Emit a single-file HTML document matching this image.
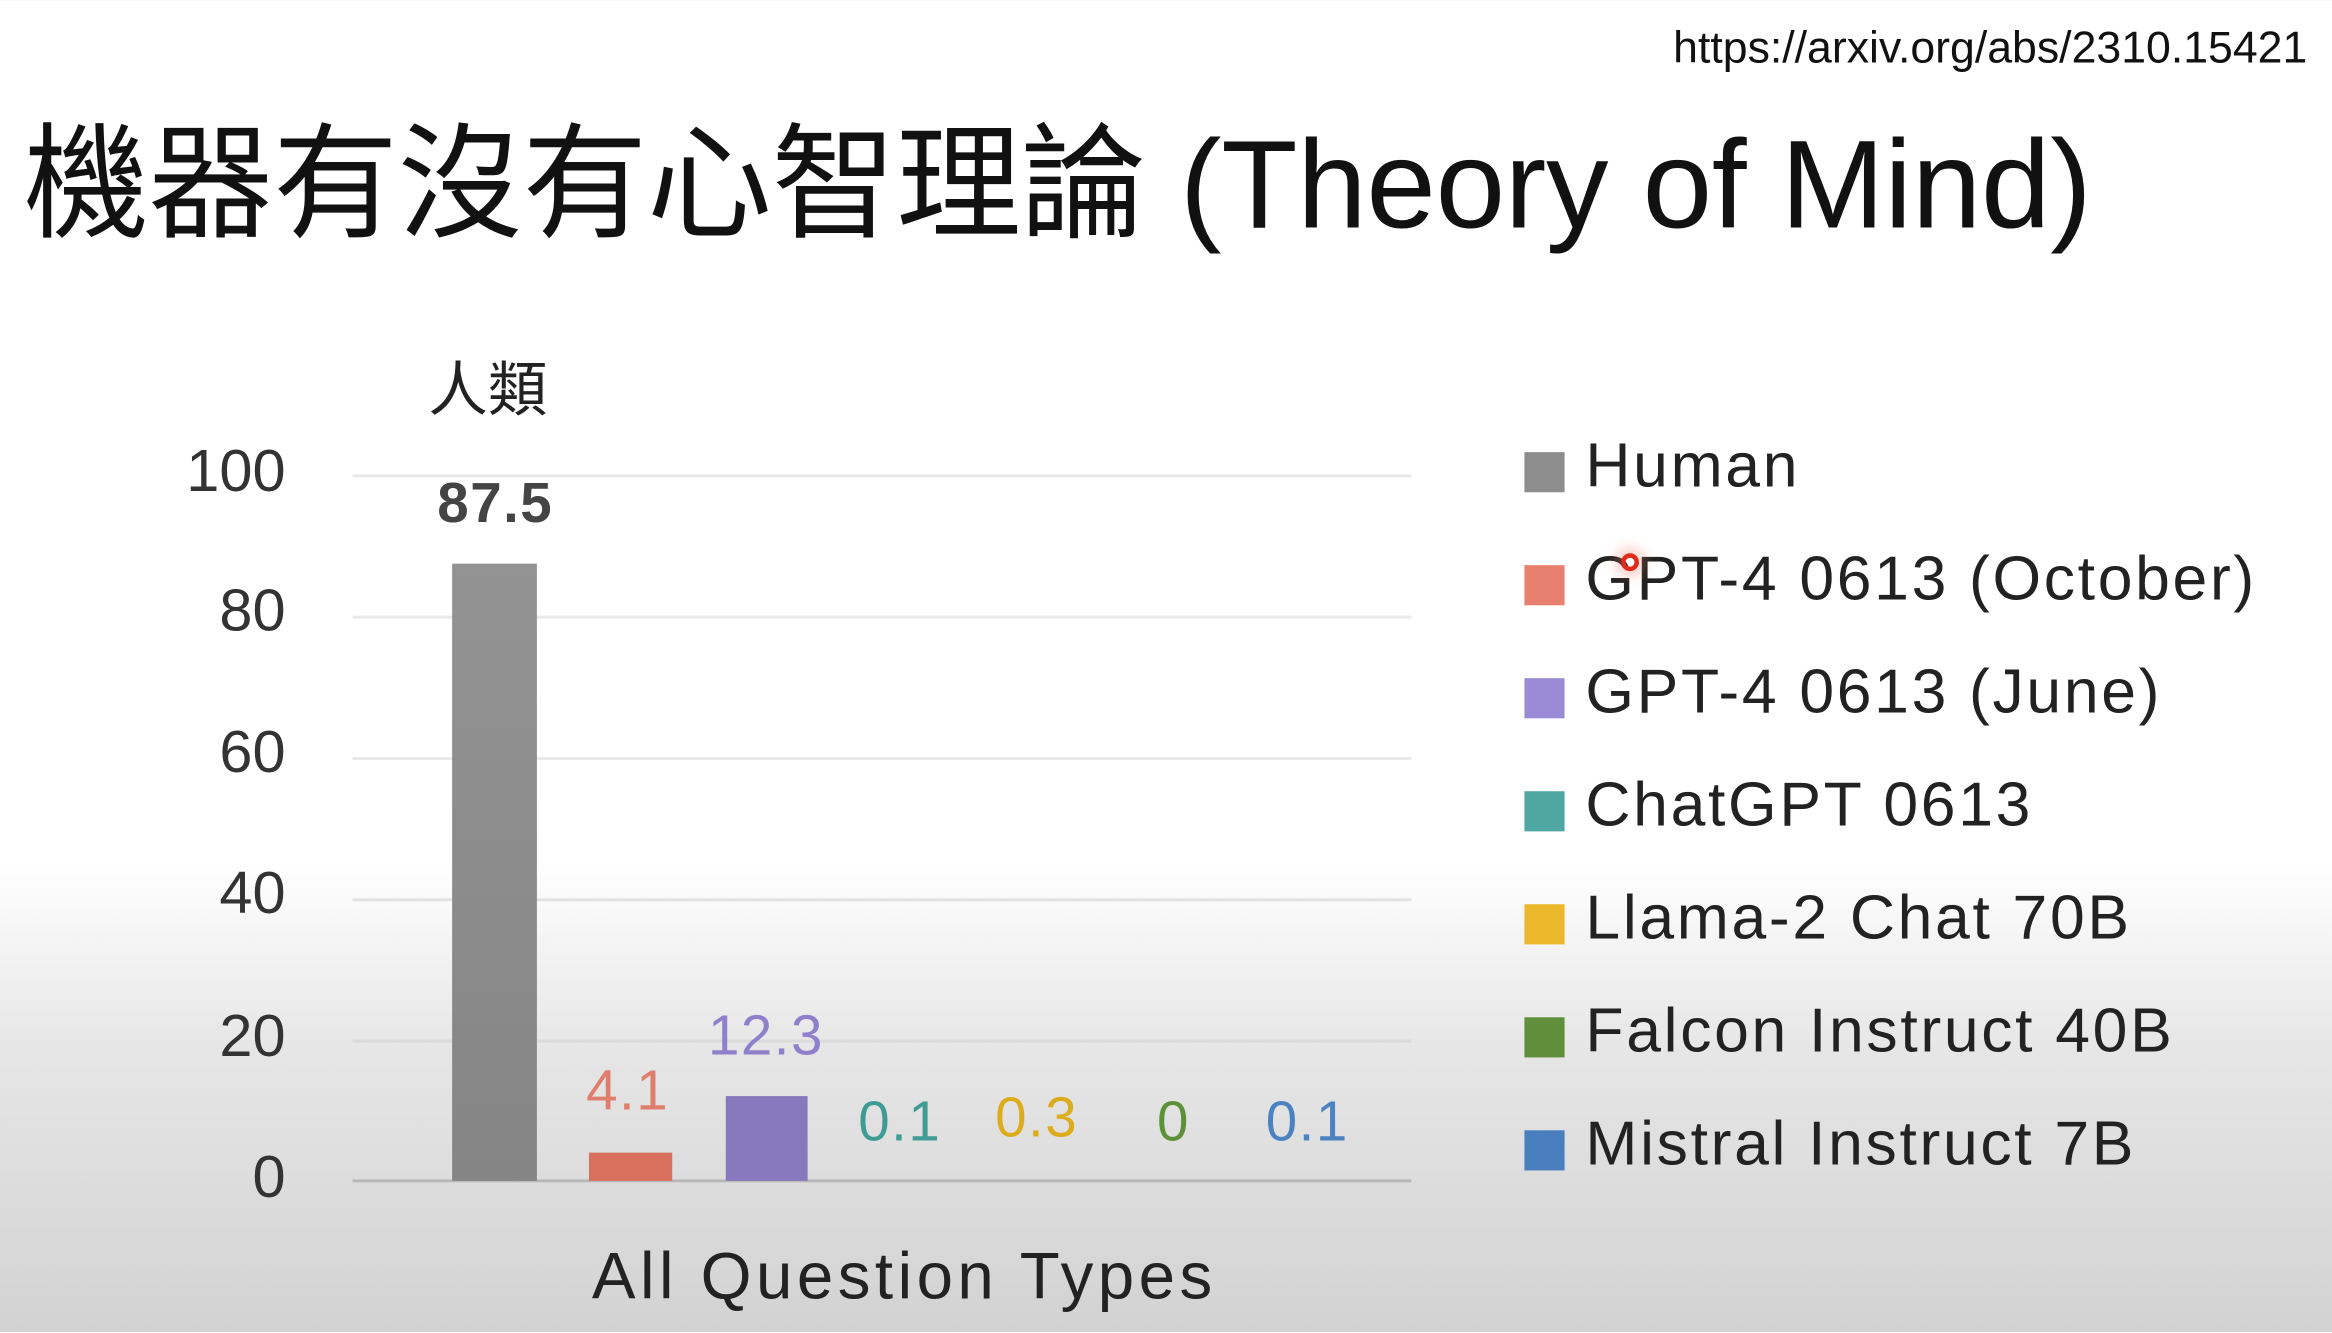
<!DOCTYPE html>
<html><head><meta charset="utf-8"><style>
html,body{margin:0;padding:0;width:2332px;height:1332px;overflow:hidden}
body{background:linear-gradient(to bottom,#fff 0,#fff 860px,#e6e6e6 1050px,#d2d2d2 1332px)}
#w{position:absolute;left:0;top:0;width:1568px;height:896px;transform:scale(1.48724);transform-origin:0 0;font-family:"Liberation Sans","Noto Sans CJK TC",sans-serif}
.t{position:absolute;line-height:1;white-space:nowrap}
.g{position:absolute;left:237px;width:712px;height:2px;background:#e9e9e9}
.b{position:absolute}
.sq{position:absolute;left:1025px;width:27px;height:27px}
.lg{position:absolute;left:1066px;font-size:42px;color:#222;line-height:1;white-space:nowrap;letter-spacing:1.8px}
.y{position:absolute;right:1376px;font-size:40px;color:#333;line-height:1}
.v{position:absolute;font-size:38px;line-height:1;transform:translateX(-50%);letter-spacing:1px}
</style></head><body><div id="w">
<div class="t" style="left:1125px;top:18px;font-size:30px;color:#111">https://arxiv.org/abs/2310.15421</div>
<div class="t" style="left:16px;top:82px;font-size:84px;color:#111;letter-spacing:-0.2px">機器有沒有心智理論 (Theory of Mind)</div>
<div class="t" style="left:288px;top:243px;font-size:40px;color:#222">人類</div>

<div class="g" style="top:319px"></div>
<div class="g" style="top:414px"></div>
<div class="g" style="top:509px"></div>
<div class="g" style="top:604px;background:#e2e2e2"></div>
<div class="g" style="top:699px;background:#dadada"></div>
<div class="g" style="top:793px;background:#b8b8b8"></div>

<div class="y" style="top:297px">100</div>
<div class="y" style="top:391px">80</div>
<div class="y" style="top:486px">60</div>
<div class="y" style="top:581px">40</div>
<div class="y" style="top:677px">20</div>
<div class="y" style="top:772px">0</div>

<div class="b" style="left:304px;top:379px;width:57px;height:415px;background:linear-gradient(#939393,#858585)"></div>
<div class="b" style="left:396px;top:775px;width:56px;height:19px;background:#d9705e"></div>
<div class="b" style="left:488px;top:737px;width:55px;height:57px;background:#8878bd"></div>

<div class="v" style="left:333px;top:320px;color:#444;font-weight:bold">87.5</div>
<div class="v" style="left:422px;top:715px;color:#e07e6e">4.1</div>
<div class="v" style="left:515px;top:678px;color:#8f80cc">12.3</div>
<div class="v" style="left:605px;top:736px;color:#3f9c95">0.1</div>
<div class="v" style="left:697px;top:733px;color:#ddac1c">0.3</div>
<div class="v" style="left:789px;top:736px;color:#5d9137">0</div>
<div class="v" style="left:879px;top:736px;color:#4b83c2">0.1</div>

<div class="t" style="left:398px;top:837px;font-size:44px;color:#222;letter-spacing:3px">All Question Types</div>

<div class="sq" style="top:304px;background:#8d8d8d"></div>
<div class="lg" style="top:292px">Human</div>
<div class="sq" style="top:380px;background:#e8806f"></div>
<div class="lg" style="top:368px">GPT-4 0613 (October)</div>
<div class="sq" style="top:456px;background:#9b8ad6"></div>
<div class="lg" style="top:444px">GPT-4 0613 (June)</div>
<div class="sq" style="top:532px;background:#4fa7a2"></div>
<div class="lg" style="top:520px">ChatGPT 0613</div>
<div class="sq" style="top:608px;background:#ecb82b"></div>
<div class="lg" style="top:596px">Llama-2 Chat 70B</div>
<div class="sq" style="top:684px;background:#5f8f3a"></div>
<div class="lg" style="top:672px">Falcon Instruct 40B</div>
<div class="sq" style="top:760px;background:#4a7fbf"></div>
<div class="lg" style="top:748px">Mistral Instruct 7B</div>
<div style="position:absolute;left:1090px;top:372px;width:12px;height:12px;border:3px solid #e02a1a;border-radius:50%;box-sizing:border-box;box-shadow:0 0 8px 4px rgba(240,120,100,.35)"></div>
</div></body></html>
